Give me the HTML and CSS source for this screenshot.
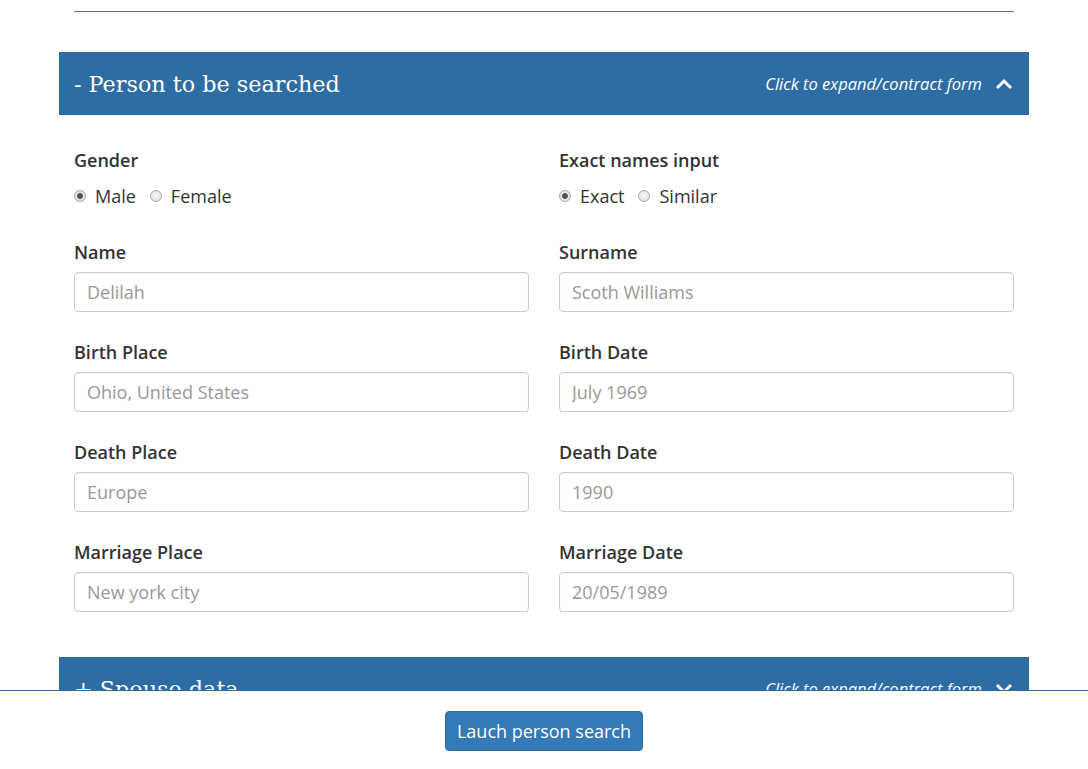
FILE: index.html
```html
<!DOCTYPE html>
<html lang="en">
<head>
<meta charset="utf-8">
<title>Person search</title>
<link rel="stylesheet" href="styles.css">
</head>
<body>
<div class="container">
  <div class="top-rule"></div>

  <section class="panel">
    <div class="panel-heading">
      <h2 class="panel-title">- Person to be searched</h2>
      <div class="toggle">
        <span class="toggle-text">Click to expand/contract form</span>
        <svg class="chev" width="18" height="12" viewBox="0 0 18 12"><path d="M2 10 L9 3 L16 10" fill="none" stroke="#fff" stroke-width="3"/></svg>
      </div>
    </div>
    <div class="panel-body">
      <div class="field">
        <div class="label">Gender</div>
        <div class="radios">
          <label class="radio"><input type="radio" name="g" checked><span>Male</span></label>
          <label class="radio"><input type="radio" name="g"><span>Female</span></label>
        </div>
      </div>
      <div class="field">
        <div class="label">Exact names input</div>
        <div class="radios">
          <label class="radio"><input type="radio" name="e" checked><span>Exact</span></label>
          <label class="radio"><input type="radio" name="e"><span>Similar</span></label>
        </div>
      </div>
      <div class="field"><label class="label">Name</label><input class="input" placeholder="Delilah"></div>
      <div class="field"><label class="label">Surname</label><input class="input" placeholder="Scoth Williams"></div>
      <div class="field"><label class="label">Birth Place</label><input class="input" placeholder="Ohio, United States"></div>
      <div class="field"><label class="label">Birth Date</label><input class="input" placeholder="July 1969"></div>
      <div class="field"><label class="label">Death Place</label><input class="input" placeholder="Europe"></div>
      <div class="field"><label class="label">Death Date</label><input class="input" placeholder="1990"></div>
      <div class="field"><label class="label">Marriage Place</label><input class="input" placeholder="New york city"></div>
      <div class="field"><label class="label">Marriage Date</label><input class="input" placeholder="20/05/1989"></div>
    </div>
  </section>

  <section class="panel">
    <div class="panel-heading">
      <h2 class="panel-title">+ Spouse data</h2>
      <div class="toggle">
        <span class="toggle-text">Click to expand/contract form</span>
        <svg class="chev" width="18" height="12" viewBox="0 0 18 12"><path d="M2 2 L9 9 L16 2" fill="none" stroke="#fff" stroke-width="3"/></svg>
      </div>
    </div>
    <div class="panel-spacer"></div>
  </section>
</div>

<footer class="footer">
  <button class="btn" type="button">Lauch person search</button>
</footer>
</body>
</html>
```
FILE: styles.css
```css
html, body {
  margin: 0;
  padding: 0;
  background: #fff;
}
body {
  font-family: "Open Sans", "Lato", sans-serif;
  color: #333;
}
.container {
  width: 970px;
  margin: 0 auto;
  padding-top: 11px;
}
.top-rule {
  margin: 0 15px;
  height: 1px;
  background: #5b7590;
}
.panel {
  margin-top: 40px;
}
.panel + .panel {
  margin-top: 45px;
}
.panel-heading {
  background: #2e6da4;
  height: 63px;
  padding: 0 16px 0 15px;
  display: flex;
  align-items: center;
  justify-content: space-between;
  color: #fff;
}
.panel-title {
  margin: 0;
  font-family: "DejaVu Serif", "Liberation Serif", serif;
  font-weight: normal;
  font-size: 22.3px;
}
.toggle {
  display: flex;
  align-items: center;
  gap: 13px;
}
.toggle-text {
  font-style: italic;
  font-size: 16.5px;
}
.chev {
  display: block;
}
.panel-body {
  display: grid;
  grid-template-columns: 1fr 1fr;
  column-gap: 30px;
  row-gap: 28px;
  padding: 33px 15px 0;
}
.field {
  display: flex;
  flex-direction: column;
}
.label {
  font-weight: 600;
  font-size: 18px;
  line-height: 24px;
  margin-bottom: 8px;
  color: #333;
}
.radios {
  display: flex;
  gap: 14px;
  height: 24px;
  align-items: center;
  margin-top: 4px;
  margin-bottom: 4px;
}
.radio {
  display: flex;
  align-items: center;
  gap: 9px;
  font-size: 18px;
  color: #333;
}
.radio input {
  appearance: none;
  -webkit-appearance: none;
  margin: 0;
  width: 12px;
  height: 12px;
  border-radius: 50%;
  border: 1px solid #a9a9a9;
  background: radial-gradient(circle at 50% 40%, #f6f6f6, #dcdcdc);
  box-sizing: border-box;
}
.radio input:checked {
  background: radial-gradient(circle, #555 0 2.6px, #e6e6e6 3.2px);
}
.input {
  box-sizing: border-box;
  height: 40px;
  width: 100%;
  border: 1px solid #ccc;
  border-radius: 4px;
  padding: 0 12px;
  font-family: "Open Sans", "Lato", sans-serif;
  font-size: 18px;
  color: #555;
  box-shadow: inset 0 1px 1px rgba(0,0,0,0.04);
}
.input::placeholder {
  color: #999;
}
.panel-spacer {
  height: 40px;
}
.footer {
  position: fixed;
  left: 0;
  right: 0;
  bottom: 0;
  height: 79px;
  background: #fff;
  border-top: 1px solid #2e6da4;
  display: flex;
  justify-content: center;
  align-items: flex-start;
  padding-top: 20px;
  box-sizing: border-box;
}
.btn {
  height: 40px;
  padding: 0 11px;
  background: #337ab7;
  color: #fff;
  border: 1px solid #2e6da4;
  border-radius: 4px;
  font-family: "Open Sans", "Lato", sans-serif;
  font-size: 18px;
}
```
